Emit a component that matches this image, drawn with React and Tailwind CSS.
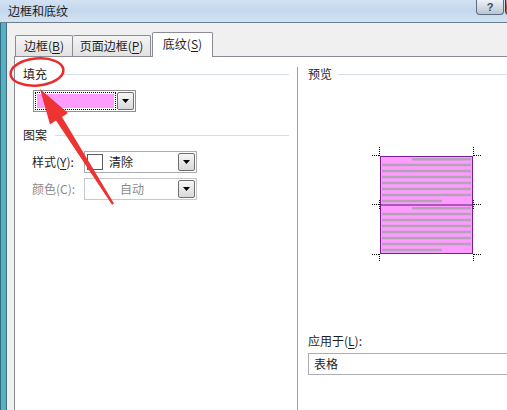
import React from 'react';

function DropButton() {
  return (
    <div className="ml-auto self-stretch w-[17px] flex items-center justify-center border border-[#707070] rounded-[2px] bg-linear-to-b from-[#f6f6f6] to-[#d9d9d9]">
      <svg width="7" height="4" viewBox="0 0 7 4">
        <path d="M0 0h7L3.5 4z" fill="#000" />
      </svg>
    </div>
  );
}

function GroupHeader({ label, className = '', lineGap = 'ml-[8px]' }) {
  return (
    <div className={`flex items-center h-[16px] ${className}`}>
      <span>{label}</span>
      <div className={`flex-1 h-px bg-[#d5dfe5] ${lineGap}`} />
    </div>
  );
}

function Preview() {
  const top = [159.3, 165, 171, 177, 183, 189, 195, 201];
  const bottom = [208.3, 214, 220, 226, 232, 238, 244, 250];
  const ox = 368;
  const oy = 145;
  const lines = (ys) =>
    ys.map((y, i) => {
      let x1 = 382;
      let x2 = 471;
      if (i === 0) x1 = 412;
      if (i === ys.length - 1) x2 = 442;
      return <line key={y} x1={x1 - ox} x2={x2 - ox} y1={y - oy} y2={y - oy} stroke="#b3a3b6" strokeWidth="2.5" />;
    });
  const dots = { stroke: '#000', strokeWidth: 1, strokeDasharray: '1 1' };
  return (
    <svg width="118" height="121" viewBox="0 0 118 121">
      <rect x="12.5" y="11.5" width="92" height="97" fill="#ff9cff" stroke="#7a1c9c" />
      {lines(top)}
      {lines(bottom)}
      <line x1="12" x2="105" y1="60" y2="60" stroke="#5a1478" strokeWidth="1.2" />
      {/* corner marks */}
      <line x1="4" x2="12" y1="10.5" y2="10.5" {...dots} />
      <line x1="11.5" x2="11.5" y1="2" y2="11" {...dots} />
      <line x1="106" x2="114" y1="10.5" y2="10.5" {...dots} />
      <line x1="105.5" x2="105.5" y1="2" y2="11" {...dots} />
      <line x1="4" x2="12" y1="59.5" y2="59.5" {...dots} />
      <line x1="11.5" x2="11.5" y1="55" y2="65" {...dots} />
      <line x1="106" x2="114" y1="59.5" y2="59.5" {...dots} />
      <line x1="105.5" x2="105.5" y1="55" y2="65" {...dots} />
      <line x1="4" x2="12" y1="109.5" y2="109.5" {...dots} />
      <line x1="11.5" x2="11.5" y1="109" y2="117" {...dots} />
      <line x1="106" x2="114" y1="109.5" y2="109.5" {...dots} />
      <line x1="105.5" x2="105.5" y1="109" y2="117" {...dots} />
    </svg>
  );
}

export default function App() {
  return (
    <div className="w-[507px] h-[410px] overflow-hidden bg-white font-['Noto_Sans_CJK_SC',sans-serif] text-[12px] leading-[16px] text-[#1e1e1e]">
      <div className="relative w-[560px] h-[440px] flex flex-col">
        {/* title bar */}
        <div className="h-[23px] shrink-0 flex border-b border-[#6d7d8e] bg-linear-to-b from-[#d2e2f3] via-[#c3d7ed] to-[#d4e4f4]">
          <span className="pl-[8px] pt-[3px] text-[12px] text-[#1a1a1a]">边框和底纹</span>
          <div className="ml-auto mr-[12px] flex items-start gap-[1px]">
            <div className="w-[28px] h-[15px] border border-t-0 border-[#5a6b7e] rounded-b-[4px] bg-linear-to-b from-[#eef2f6] to-[#b9c5d3] flex items-center justify-center text-[11px] leading-none font-bold text-[#3b4b5b] font-['Liberation_Sans',sans-serif]">
              ?
            </div>
            <div className="w-[43px] h-[15px] border border-t-0 border-[#5a2a20] rounded-b-[4px] bg-linear-to-b from-[#e9a28c] via-[#c7452d] to-[#d4664f]" />
          </div>
        </div>

        <div className="flex flex-1">
          {/* window frame */}
          <div className="w-[7px] shrink-0 bg-[#5ab0c2] border-l border-r border-l-[#2d6f7f] border-r-[#3b6f7c]" />

          {/* client */}
          <div className="flex-1 flex flex-col bg-[#f0f0f0] pl-[7px] pt-[9px]">
            {/* tabs */}
            <div className="flex items-end h-[24px]">
              <div className="ml-[1px] w-[58px] h-[21px] border border-b-0 border-[#898c95] rounded-t-[2px] bg-linear-to-b from-[#f4f4f4] to-[#e2e2e2] flex items-center justify-center">
                边框(<span className="underline underline-offset-2">B</span>)
              </div>
              <div className="w-[78px] h-[21px] border border-b-0 border-l-0 border-[#898c95] rounded-t-[2px] bg-linear-to-b from-[#f4f4f4] to-[#e2e2e2] flex items-center justify-center">
                页面边框(<span className="underline underline-offset-2">P</span>)
              </div>
              <div className="relative z-10 ml-[1px] -mb-px w-[61px] h-[25px] border border-b-0 border-[#898c95] rounded-t-[2px] bg-white flex items-center justify-center pb-[2px]">
                底纹(<span className="underline underline-offset-2">S</span>)
              </div>
            </div>

            {/* panel */}
            <div className="flex-1 flex bg-white border-t border-l border-[#898c95]">
              {/* left column */}
              <div className="w-[282px] shrink-0 pl-[8px] pr-[8px]">
                <GroupHeader label="填充" className="mt-[9px]" lineGap="ml-[14px]" />
                <div className="ml-[10px] mt-[8px] w-[103px] h-[22px] border border-[#8e8f8f] bg-white p-[1px] flex gap-[1px]">
                  <div className="w-[82px] border border-dotted border-black p-[1px]">
                    <div className="w-full h-full bg-[#ff9cff]" />
                  </div>
                  <DropButton />
                </div>

                <GroupHeader label="图案" className="mt-[15px]" />

                <div className="mt-[8px] pl-[9px] flex items-center">
                  <span className="w-[52px]">
                    样式(<span className="underline underline-offset-2">Y</span>):
                  </span>
                  <div className="w-[113px] h-[22px] border border-[#abadb3] bg-white p-[1px] pl-[2px] flex items-center">
                    <div className="w-[16px] h-[16px] border border-[#5a5a5a] bg-white" />
                    <span className="ml-[6px] text-[12px]">清除</span>
                    <DropButton />
                  </div>
                </div>

                <div className="mt-[5px] pl-[9px] flex items-center text-[#8a8a8a]">
                  <span className="w-[52px]">颜色(C):</span>
                  <div className="w-[113px] h-[22px] border border-[#c9c9c9] bg-white p-[1px] flex items-center">
                    <span className="flex-1 text-center">自动</span>
                    <DropButton />
                  </div>
                </div>
              </div>

              {/* divider */}
              <div className="w-px mt-[10px] bg-[#a0a0a0]" />

              {/* right column */}
              <div className="flex-1 pl-[10px] flex flex-col">
                <GroupHeader label="预览" className="mt-[9px]" lineGap="ml-[6px]" />
                <div className="mt-[63px] ml-[60px]">
                  <Preview />
                </div>
                <div className="mt-[67px]">
                  应用于(<span className="underline underline-offset-2">L</span>):
                </div>
                <div className="mt-[4px] w-[240px] h-[22px] border border-[#abadb3] bg-white pl-[5px] flex items-center">
                  表格
                </div>
              </div>
            </div>
          </div>
        </div>

        {/* red annotation */}
        <svg className="absolute inset-0 pointer-events-none" width="507" height="410" viewBox="0 0 507 410">
          <ellipse cx="37" cy="72" rx="26.5" ry="13.5" fill="none" stroke="#ec2b2b" strokeWidth="2.5" transform="rotate(-5 37 72)" />
          <path d="M40 89 L68 113 L62 117 L114 203.5 L112 204.8 L56 120.5 L50 124.5 Z" fill="#ee3333" />
        </svg>
      </div>
    </div>
  );
}
